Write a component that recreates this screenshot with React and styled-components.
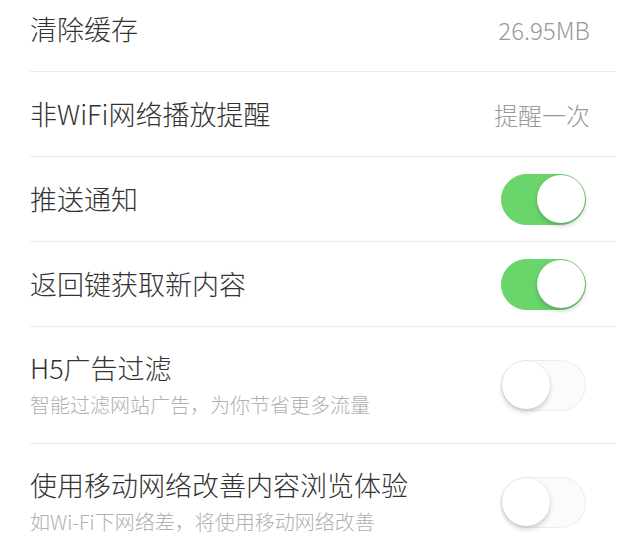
import React from "react";
import styled, { createGlobalStyle } from "styled-components";

const GlobalStyle = createGlobalStyle`
  html, body {
    margin: 0;
    padding: 0;
    background: #ffffff;
    overflow: hidden;
  }
  body {
    font-family: "Noto Sans CJK SC", "Noto Sans", sans-serif;
  }
`;

const List = styled.div`
  margin-top: -13px;
  width: 628px;
`;

const Row = styled.div`
  display: flex;
  align-items: center;
  justify-content: space-between;
  height: ${(p) => (p.tall ? 116 : 84)}px;
  margin-left: 30px;
  margin-right: 12px;
  padding-right: 30px;
  border-bottom: 1px solid #ececec;
`;

const Label = styled.div`
  display: flex;
  flex-direction: column;
  gap: 8px;
`;

const Title = styled.div`
  font-size: 27px;
  line-height: 32px;
  font-weight: 300;
  color: #333333;
`;

const Sub = styled.div`
  font-size: 20px;
  line-height: 26px;
  font-weight: 300;
  color: #b0b0b0;
`;

const Value = styled.div`
  font-size: 24px;
  color: #9a9a9a;
  font-weight: 300;
  margin-right: -4px;
`;

const Track = styled.div`
  position: relative;
  width: 85px;
  height: 51px;
  border-radius: 26px;
  box-sizing: border-box;
  background: ${(p) => (p.on ? "#6ad56a" : "#fbfbfb")};
  border: 1.5px solid ${(p) => (p.on ? "#6ad56a" : "#ececec")};
  flex-shrink: 0;
`;

const Knob = styled.div`
  position: absolute;
  top: 0;
  left: ${(p) => (p.on ? "35px" : "0")};
  width: 48px;
  height: 48px;
  border-radius: 50%;
  background: #ffffff;
  box-shadow: 0 3px 5px rgba(0, 0, 0, 0.18), 0 0 0 0.5px rgba(0, 0, 0, 0.06);
`;

function Toggle({ on }) {
  return (
    <Track on={on ? 1 : 0}>
      <Knob on={on ? 1 : 0} />
    </Track>
  );
}

const items = [
  { title: "清除缓存", value: "26.95MB" },
  { title: "非WiFi网络播放提醒", value: "提醒一次" },
  { title: "推送通知", toggle: true, on: true },
  { title: "返回键获取新内容", toggle: true, on: true },
  { title: "H5广告过滤", sub: "智能过滤网站广告，为你节省更多流量", toggle: true, on: false },
  { title: "使用移动网络改善内容浏览体验", sub: "如Wi-Fi下网络差，将使用移动网络改善", toggle: true, on: false },
];

export default function App() {
  return (
    <>
      <GlobalStyle />
      <List>
        {items.map((item, index) => (
          <Row key={index} tall={item.sub ? 1 : 0}>
            <Label>
              <Title>{item.title}</Title>
              {item.sub ? <Sub>{item.sub}</Sub> : null}
            </Label>
            {item.toggle ? <Toggle on={item.on} /> : <Value>{item.value}</Value>}
          </Row>
        ))}
      </List>
    </>
  );
}
